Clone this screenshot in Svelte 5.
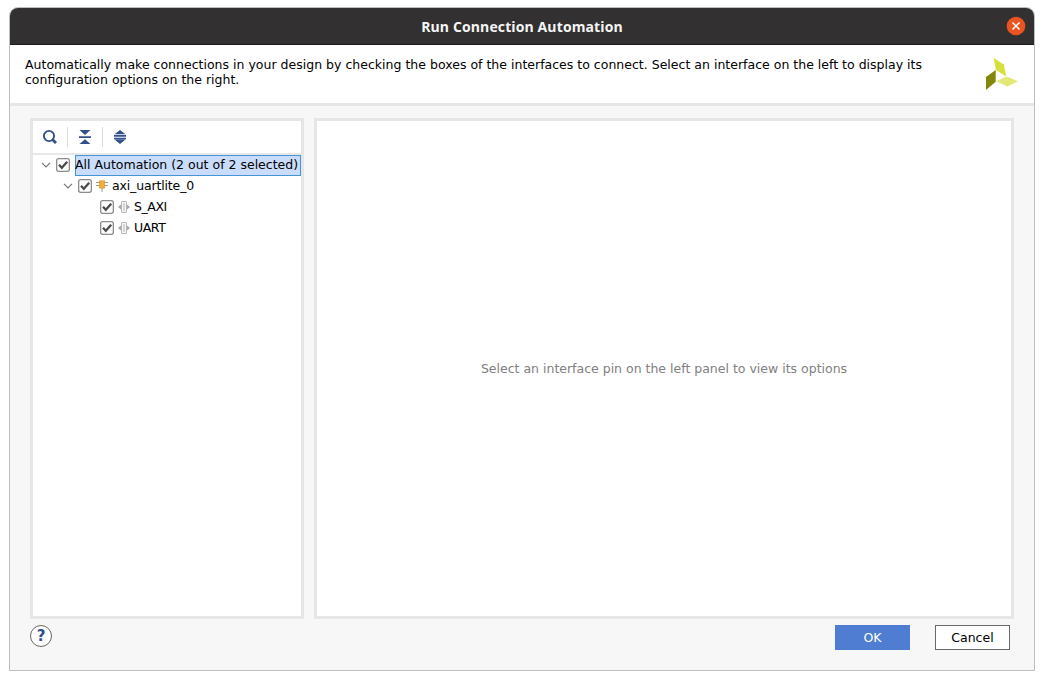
<script>
  let rows = $state([
    { label: 'All Automation (2 out of 2 selected)', depth: 0, kind: 'root', checked: true },
    { label: 'axi_uartlite_0', depth: 1, kind: 'cell', checked: true },
    { label: 'S_AXI', depth: 2, kind: 'pin', checked: true },
    { label: 'UART', depth: 2, kind: 'pin', checked: true }
  ]);
</script>

<main class="window">
  <header class="title">
    <span class="title-text">Run Connection Automation</span>
    <button class="close" aria-label="Close">
      <svg width="20" height="20" viewBox="0 0 20 20"><circle cx="10" cy="10" r="9.3" fill="#e95420" /><path d="M6.5 6.5l7 7M13.5 6.5l-7 7" stroke="#fff" stroke-width="1.5" /></svg>
    </button>
  </header>

  <section class="intro">
    <p><span class="line one">Automatically make connections in your design by checking the boxes of the interfaces to connect. Select an interface on the left to display its</span><span class="line two">configuration options on the right.</span></p>
    <svg class="logo" width="32" height="33" viewBox="0 0 32 33">
      <path d="M7.6 0L17.8 6.6L20.3 18.6L10 12Z" fill="#d5e03b" />
      <path d="M0 18.9L9.7 12V23.8L0 32Z" fill="#838709" />
      <path d="M10 23.3L20.5 18.4L32 23.3L21.6 28.4Z" fill="#e2e976" />
    </svg>
  </section>

  <div class="body">
    <div class="panel tree-panel">
      <div class="toolbar">
        <button aria-label="Search"><svg width="16" height="16" viewBox="0 0 16 16"><circle cx="7" cy="7" r="5.1" fill="none" stroke="#34508a" stroke-width="1.9" /><path d="M10.7 10.7L14 14" stroke="#34508a" stroke-width="2.8" /></svg></button>
        <i></i>
        <button aria-label="Collapse all"><svg width="16" height="16" viewBox="0 0 16 16" fill="#34508a"><path d="M2.5 1H13.5L8 6ZM2 7.2H14V9H2ZM8 10.2L13.5 15H2.5Z" /></svg></button>
        <i></i>
        <button aria-label="Expand all"><svg width="16" height="16" viewBox="0 0 16 16" fill="#34508a"><path d="M8 1L13.5 5.3H2.5ZM2 6H14V7.7H2ZM2 8.7H14V10.2H2ZM2.5 10.6H13.5L8 15Z" /></svg></button>
      </div>
      <div class="tree">
        {#each rows as row}
          <div class="row depth-{row.depth}">
            {#if row.kind !== 'pin'}
              <svg class="arrow" width="10" height="6" viewBox="0 0 10 6"><path d="M1 .8L5 4.8L9 .8" fill="none" stroke="#777" stroke-width="1.2" /></svg>
            {/if}
            <button class="check" role="checkbox" aria-checked={row.checked} aria-label={row.label} onclick={() => (row.checked = !row.checked)}>
              <svg width="14" height="14" viewBox="0 0 14 14"><rect x=".65" y=".65" width="12.7" height="12.7" rx="2" fill="#fcfcfc" stroke="#8c8c8c" stroke-width="1.3" />{#if row.checked}<path d="M3 6.8L5.8 9.7L11.2 3.8" fill="none" stroke="#4b4b4b" stroke-width="2.3" />{/if}</svg>
            </button>
            {#if row.kind === 'cell'}
              <svg class="glyph" width="12" height="12" viewBox="0 0 12 12"><path d="M0 2.5H12M0 5.5H12M6 8V12" stroke="#999" stroke-width="1" /><path d="M3.5 .8H8.5V8.2H3.5Z" fill="#f7ae2e" stroke="#d99a35" stroke-width=".7" /></svg>
            {:else if row.kind === 'pin'}
              <svg class="glyph" width="12" height="12" viewBox="0 0 12 12"><path d="M0 6L3 3.5V8.5ZM12 6L9 3.5V8.5Z" fill="#a7a7a7" /><rect x="3.5" y=".5" width="5" height="11" rx=".5" fill="#f4f4f4" stroke="#b8b8b8" /><path d="M6 2V10" stroke="#d3d7da" stroke-width="2" /></svg>
            {/if}
            <span class="label {row.kind}">{row.label}</span>
          </div>
        {/each}
      </div>
    </div>
    <div class="panel options"><span>Select an interface pin on the left panel to view its options</span></div>
  </div>

  <footer>
    <button class="help" aria-label="Help">?</button>
    <button class="action ok"><span>OK</span></button>
    <button class="action cancel"><span>Cancel</span></button>
  </footer>
</main>

<style>
  :global(body) { background: #fff; }
  * { box-sizing: border-box; }
  button { padding: 0; border: 0; background: none; font: inherit; color: inherit; }
  svg { display: block; flex: none; }
  .window { width: 1026px; height: 664px; margin: 7px 0 0 9px; border: 1px solid #bebebe; border-radius: 9px 9px 0 0; background: #f7f7f7; overflow: hidden; display: flex; flex-direction: column; font: 12.5px/15px "DejaVu Sans", sans-serif; color: #000; }
  .title { height: 37px; flex: none; background: #323030; border-bottom: 1px solid #1c1b1b; display: grid; grid-template-columns: 1fr auto 1fr; align-items: center; color: #f5f5f5; }
  .title-text { grid-column: 2; padding-top: 1px; font: bold 14px/18px "Open Sans", sans-serif; letter-spacing: .12px; white-space: nowrap; }
  .close { justify-self: end; margin: 0 8px 0 0; }
  .intro { height: 61px; flex: none; background: #fff; border-bottom: 3px solid #e6e6e6; display: flex; justify-content: space-between; padding: 13px 16px 0 15px; }
  p { margin: -1px 0 0; }
  .line { display: block; white-space: nowrap; }
  .one { letter-spacing: .01px; }
  .body { display: flex; gap: 10px; height: 501px; flex: none; margin: 12px 20px 0; }
  .panel { border: 3px solid #e6e6e6; background: #fff; }
  .tree-panel { width: 274px; flex: none; }
  .options { width: 700px; flex: none; display: flex; align-items: center; justify-content: center; color: #808080; white-space: nowrap; }
  .toolbar { height: 34px; display: flex; align-items: center; padding-left: 9px; border-bottom: 2px solid #e8e8e8; }
  .toolbar i { width: 1px; height: 20px; background: #d9d9d9; margin: 0 9px; }
  .row { height: 21px; padding-bottom: 2px; display: flex; align-items: center; white-space: nowrap; }
  .depth-0 { padding-left: 8px; padding-bottom: 0; }
  .depth-0 .check, .depth-0 .arrow { margin-bottom: 2px; }
  .depth-1 { padding-left: 30px; }
  .depth-2 { padding-left: 67px; }
  .check { margin-left: 5px; }
  .depth-2 .check { margin-left: 0; }
  .glyph { margin-left: 4px; }
  .label { margin-left: 4px; }
  .label.cell { letter-spacing: -.15px; }
  .label.pin { letter-spacing: -.45px; }
  .label.root { height: 21px; flex: 1; min-width: 0; margin-left: 5px; border: 1px solid #4694d8; background: #c9dcfc; line-height: 18px; text-indent: -1px; }
  footer { display: flex; padding: 6px 24px 0 20px; align-items: flex-start; }
  .help { width: 22px; height: 22px; margin-right: auto; border: 1px solid #686868; border-radius: 50%; background: #fff; color: #2e4b90; font-size: 15px; font-weight: bold; line-height: 20px; }
  .action { width: 75px; height: 25px; margin-left: 25px; }
  .ok { background: #4f7dd1; color: #fff; }
  .cancel { border: 1px solid #686868; background: #fff; }
</style>
